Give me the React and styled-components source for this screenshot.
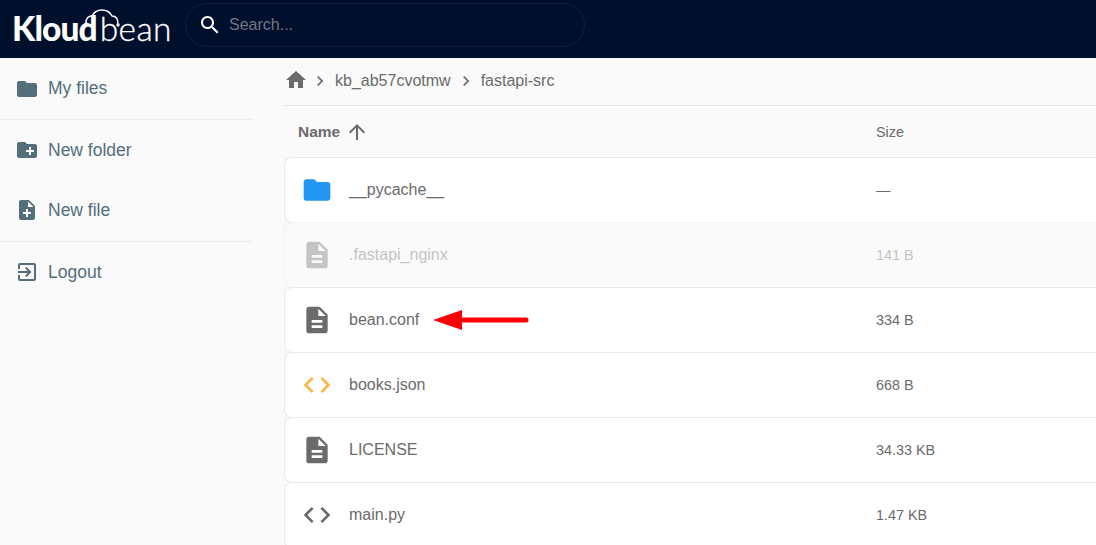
import React from 'react';
import styled, { createGlobalStyle } from 'styled-components';

const Global = createGlobalStyle`
  html, body { margin: 0; padding: 0; height: 100%; overflow: hidden; background: #fafafa; }
  body { font-family: "Liberation Sans", Arial, sans-serif; }
  * { box-sizing: border-box; }
`;

const P = {
  folder: 'M10 4H4c-1.1 0-1.99.9-1.99 2L2 18c0 1.1.9 2 2 2h16c1.1 0 2-.9 2-2V8c0-1.1-.9-2-2-2h-8l-2-2z',
  newFolder: 'M20 6h-8l-2-2H4c-1.11 0-1.99.89-1.99 2L2 18c0 1.11.89 2 2 2h16c1.11 0 2-.89 2-2V8c0-1.11-.89-2-2-2zm-1 8h-3v3h-2v-3h-3v-2h3V9h2v3h3v2z',
  newFile: 'M14 2H6c-1.1 0-1.99.9-1.99 2L4 20c0 1.1.89 2 1.99 2H18c1.1 0 2-.9 2-2V8l-6-6zm2 14h-3v3h-2v-3H8v-2h3v-3h2v3h3v2zm-3-7V3.5L18.5 9H13z',
  logout: 'M10.09 15.59L11.5 17l5-5-5-5-1.41 1.41L12.67 11H3v2h9.67l-2.58 2.59zM19 3H5c-1.11 0-2 .9-2 2v4h2V5h14v14H5v-4H3v4c0 1.1.89 2 2 2h14c1.1 0 2-.9 2-2V5c0-1.1-.9-2-2-2z',
  doc: 'M14 2H6c-1.1 0-1.99.9-1.99 2L4 20c0 1.1.89 2 1.99 2H18c1.1 0 2-.9 2-2V8l-6-6zm2 16H8v-2h8v2zm0-4H8v-2h8v2zm-3-5V3.5L18.5 9H13z',
  home: 'M10 20v-6h4v6h5v-8h3L12 3 2 12h3v8z',
  code: 'M9.4 16.6L4.8 12l4.6-4.6L8 6l-6 6 6 6 1.4-1.4zm5.2 0l4.6-4.6-4.6-4.6L16 6l6 6-6 6-1.4-1.4z',
  search: 'M15.5 14h-.79l-.28-.27C15.41 12.59 16 11.11 16 9.5 16 5.91 13.09 3 9.5 3S3 5.91 3 9.5 5.91 16 9.5 16c1.61 0 3.09-.59 4.23-1.57l.27.28v.79l5 4.99L20.49 19l-4.99-5zm-6 0C7.01 14 5 11.99 5 9.5S7.01 5 9.5 5 14 7.01 14 9.5 11.99 14 9.5 14z',
  up: 'M4 12l1.41 1.41L11 7.83V20h2V7.83l5.58 5.59L20 12l-8-8-8 8z',
  next: 'M10 6L8.59 7.41 13.17 12l-4.58 4.59L10 18l6-6z',
};

const Svg = styled.svg`
  display: block;
  flex: none;
  width: ${p => p.$size || 24}px;
  height: ${p => p.$size || 24}px;
  fill: ${p => p.$color || 'currentColor'};
`;
const Icon = ({ d, size, color }) => (
  <Svg viewBox="0 0 24 24" $size={size} $color={color}><path d={d} /></Svg>
);

const Page = styled.div`
  width: 1096px;
  height: 545px;
  overflow: hidden;
  display: flex;
  flex-direction: column;
  background: #fafafa;
`;
const Header = styled.header`
  height: 58px;
  flex: none;
  background: #000f2b;
  display: flex;
  align-items: flex-start;
  padding: 3px 0 0 12px;
`;
const Logo = styled.div`
  position: relative;
  width: 158px;
  height: 44px;
  margin-right: 15px;
  color: #fff;
  font-family: Lato, "Liberation Sans", sans-serif;
  font-size: 33.5px;
  line-height: 44px;
  padding-top: 3px;
  white-space: nowrap;
  letter-spacing: -0.9px;
`;
const LogoBold = styled.span`font-weight: 900;`;
const LogoLight = styled.span`
  font-weight: 300;
  letter-spacing: 0.4px;
  margin-left: 3px;
  -webkit-text-stroke: 0.3px #fff;
`;
const LogoCloud = styled.svg`
  position: absolute;
  left: 72px;
  top: 6px;
  width: 36px;
  height: 18px;
  fill: none;
  stroke: #fff;
  stroke-width: 1.4;
`;
const Search = styled.div`
  width: 400px;
  height: 44px;
  border: 1px solid #0a2145;
  border-radius: 22px;
  display: flex;
  align-items: center;
  padding-left: 12px;
  gap: 7px;
  color: #fff;
`;
const SearchText = styled.span`
  font-size: 16px;
  color: #6f7683;
`;
const Body = styled.div`
  flex: 1;
  display: flex;
  min-height: 0;
`;
const Sidebar = styled.aside`
  width: 252px;
  flex: none;
  color: #546e7a;
`;
const NavGroup = styled.div`
  padding-bottom: ${p => p.$pb || 0}px;
  border-bottom: ${p => (p.$line ? '1px solid #ececec' : 'none')};
`;
const NavItem = styled.div`
  height: ${p => p.$h || 60}px;
  display: flex;
  align-items: center;
  gap: 9px;
  padding-left: 15px;
  font-size: 17.5px;
`;
const Main = styled.main`
  flex: 1;
  min-width: 0;
  padding-left: 32px;
`;
const Crumbs = styled.nav`
  height: 48px;
  display: flex;
  align-items: center;
  border-bottom: 1px solid #e8e8e8;
  color: #6b6b6b;
  font-size: 16px;
  padding-bottom: 2px;
`;
const HomeLink = styled.span`
  display: flex;
  margin: -1px -3px 0 0;
`;
const Sep = styled.span`
  margin: 0 5px;
  display: flex;
`;
const TableHead = styled.div`
  height: 51px;
  display: flex;
  align-items: center;
  padding-left: 14px;
  color: #6b6b6b;
`;
const NameHead = styled.div`
  width: 578px;
  display: flex;
  align-items: center;
  gap: 5px;
  font-size: 15.5px;
  font-weight: 700;
`;
const SizeHead = styled.div`
  font-size: 14.4px;
`;
const Row = styled.div`
  position: relative;
  height: 66px;
  margin: 0 -12px -1px 0;
  display: flex;
  align-items: center;
  background: ${p => (p.$dim ? '#fafafa' : '#fff')};
  border: 1px solid ${p => (p.$dim ? '#f2f2f2' : '#e8e8e8')};
  border-right: none;
  border-radius: 8px;
  color: ${p => (p.$dim ? '#c4c4c4' : '#6b6b6b')};
  padding: 0 0 1px 16px;
`;
const NameCell = styled.div`
  width: 575px;
  display: flex;
  align-items: center;
  gap: 16px;
  font-size: 16px;
`;
const SizeCell = styled.div`
  font-size: 14.4px;
`;
const Arrow = styled.svg`
  position: absolute;
  left: 147px;
  top: 21px;
  width: 98px;
  height: 22px;
`;

const files = [
  { name: '__pycache__', size: '—', icon: P.folder, color: '#2196f3' },
  { name: '.fastapi_nginx', size: '141 B', icon: P.doc, dim: true },
  { name: 'bean.conf', size: '334 B', icon: P.doc, arrow: true },
  { name: 'books.json', size: '668 B', icon: P.code, color: '#fbb73c' },
  { name: 'LICENSE', size: '34.33 KB', icon: P.doc },
  { name: 'main.py', size: '1.47 KB', icon: P.code },
];

export default function App() {
  return (
    <Page>
      <Global />
      <Header>
        <Logo>
          <LogoBold>Kloud</LogoBold><LogoLight>bean</LogoLight>
          <LogoCloud viewBox="0 0 36 18">
            <circle cx="2" cy="15" r="1" />
            <path d="M2 14C2 10 4 7 8 7C10 3 14 1 18 1C22 1 26 3 28 7C32 7 34 10 34 15" />
            <circle cx="34" cy="16" r="1" />
          </LogoCloud>
        </Logo>
        <Search>
          <Icon d={P.search} size={24} />
          <SearchText>Search...</SearchText>
        </Search>
      </Header>
      <Body>
        <Sidebar>
          <NavGroup $line>
            <NavItem $h={61}><Icon d={P.folder} />My files</NavItem>
          </NavGroup>
          <NavGroup $line $pb={1}>
            <NavItem><Icon d={P.newFolder} />New folder</NavItem>
            <NavItem><Icon d={P.newFile} />New file</NavItem>
          </NavGroup>
          <NavGroup>
            <NavItem><Icon d={P.logout} />Logout</NavItem>
          </NavGroup>
        </Sidebar>
        <Main>
          <Crumbs>
            <HomeLink><Icon d={P.home} /></HomeLink>
            <Sep><Icon d={P.next} size={20} /></Sep>
            <span>kb_ab57cvotmw</span>
            <Sep><Icon d={P.next} size={20} /></Sep>
            <span>fastapi-src</span>
          </Crumbs>
          <TableHead>
            <NameHead>Name <Icon d={P.up} size={24} /></NameHead>
            <SizeHead>Size</SizeHead>
          </TableHead>
          {files.map(f => (
            <Row key={f.name} $dim={f.dim}>
              <NameCell>
                <Icon d={f.icon} size={32} color={f.color} />
                {f.name}
              </NameCell>
              <SizeCell>{f.size}</SizeCell>
              {f.arrow && (
                <Arrow viewBox="0 0 98 22">
                  <path d="M1 11L30 1V8.5H94a2.5 2.5 0 0 1 0 5H30V21Z" fill="#fb0007" />
                </Arrow>
              )}
            </Row>
          ))}
        </Main>
      </Body>
    </Page>
  );
}
